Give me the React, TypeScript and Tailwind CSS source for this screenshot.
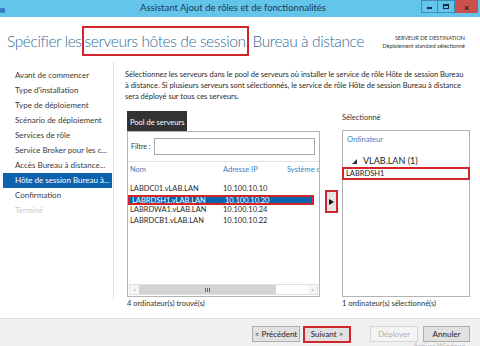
import React from "react";

const steps = [
  "Avant de commencer",
  "Type d'installation",
  "Type de déploiement",
  "Scénario de déploiement",
  "Services de rôle",
  "Service Broker pour les c...",
  "Accès Bureau à distance...",
  "Hôte de session Bureau à...",
  "Confirmation",
  "Terminé",
];

const servers = [
  { name: "LABDC01.vLAB.LAN", ip: "10.100.10.10" },
  { name: "LABRDSH1.vLAB.LAN", ip: "10.100.10.20", selected: true },
  { name: "LABRDWA1.vLAB.LAN", ip: "10.100.10.24" },
  { name: "LABRDCB1.vLAB.LAN", ip: "10.100.10.22" },
];

const intro = [
  "Sélectionnez les serveurs dans le pool de serveurs où installer le service de rôle Hôte de session Bureau",
  "à distance. Si plusieurs serveurs sont sélectionnés, le service de rôle Hôte de session Bureau à distance",
  "sera déployé sur tous ces serveurs.",
];

export default function App() {
  return (
    <div
      className="w-[480px] h-[346px] bg-white flex flex-col overflow-hidden text-[#1e1e1e]"
      style={{ fontFamily: 'Lato, "Open Sans", sans-serif' }}
    >
      {/* title bar */}
      <div className="h-[17px] bg-[#63c5ea] flex items-start relative shrink-0">
        <div className="w-[5px] h-[5px] bg-[#3a7bbf] mt-[8px] rounded-[1px]" />
        <div className="flex-1 text-center text-[9.5px] leading-[15px] text-[#1b3a55] pl-[40px]">
          Assistant Ajout de rôles et de fonctionnalités
        </div>
        <div className="flex h-[13px] mr-[2px]">
          <div className="w-[17px] h-[13px] border border-[#3a8fb8] flex items-end justify-center pb-[3px]">
            <div className="w-[5px] h-[2px] bg-[#1a2a3a]" />
          </div>
          <div className="w-[17px] h-[13px] border border-l-0 border-[#3a8fb8] flex items-center justify-center">
            <div className="w-[6px] h-[5px] border-[1.5px] border-t-[2px] border-[#1a2a3a]" />
          </div>
          <div className="w-[23px] h-[13px] bg-[#c8504d] flex items-center justify-center text-[8px] font-bold text-[#3a1010] leading-none">
            x
          </div>
        </div>
      </div>

      {/* header */}
      <div className="h-[45px] shrink-0 flex items-center justify-between pl-[7px] pr-[15px] pt-[5px]">
        <div className="text-[15.5px] font-light text-[#346d98] leading-none whitespace-nowrap tracking-[-0.4px]">
          Spécifier les
          <span className="border-2 border-[#d0262b] px-[1px] py-[4px]">serveurs hôtes de session</span>
          {" "}Bureau à distance
        </div>
        <div className="text-right text-[5.5px] leading-[8px] text-[#333] whitespace-nowrap">
          <div>SERVEUR DE DESTINATION</div>
          <div>Déploiement standard sélectionné</div>
        </div>
      </div>

      {/* body */}
      <div className="flex-1 flex min-h-0">
        <div className="w-[114px] shrink-0 pt-[6px] pl-[3px] pr-[1px] border-r border-[#e3e3e3] mb-[18px]">
          {steps.map((s, i) => (
            <div
              key={s}
              className={`h-[15px] leading-[15px] pl-[12px] text-[8px] whitespace-nowrap overflow-hidden ${
                i === 7
                  ? "bg-[#0d62ad] text-white"
                  : i === 9
                  ? "text-[#c8c8c8]"
                  : "text-[#3a3a3a]"
              }`}
            >
              {s}
            </div>
          ))}
        </div>

        <div className="flex-1 pl-[11px] pr-[8px] pt-[7px] flex flex-col">
          <div className="text-[7.5px] leading-[11px] text-[#2a2a2a]">
            {intro.map((l) => (
              <div key={l} className="whitespace-nowrap">
                {l}
              </div>
            ))}
          </div>

          <div className="flex mt-[9px]">
            {/* left pool */}
            <div className="w-[193px] ml-[2px] flex flex-col">
              <div className="h-[20px] w-[60px] bg-[#333333] text-white text-[7.5px] leading-[24px] pl-[3px] whitespace-nowrap">
                Pool de serveurs
              </div>
              <div className="h-[166px] border border-[#b4b4b4] flex flex-col">
                <div className="flex items-center h-[30px] pl-[3px] pr-[4px] border-b border-[#e2e2e2]">
                  <span className="text-[7px] text-[#333] w-[23px] shrink-0 whitespace-nowrap">Filtre :</span>
                  <div className="flex-1 h-[17px] border border-[#a9a9a9] bg-white" />
                </div>
                <div className="flex text-[7.5px] text-[#3a7fc4] h-[16px] leading-[16px] pl-[2px] whitespace-nowrap overflow-hidden">
                  <span className="w-[93px] shrink-0">Nom</span>
                  <span className="w-[64px] shrink-0">Adresse IP</span>
                  <span>Système d</span>
                </div>
                <div className="mt-[6px] pr-[5px]">
                  {servers.map((s) => (
                    <div
                      key={s.name}
                      className={`flex h-[10.5px] text-[7.5px] pl-[2px] whitespace-nowrap ${
                        s.selected
                          ? "bg-[#0d62ad] text-white border-2 border-[#d0262b] pl-0 leading-[7px]"
                          : "text-[#2a2a2a] leading-[10px]"
                      }`}
                    >
                      <span className="w-[93px] shrink-0">{s.name}</span>
                      <span>{s.ip}</span>
                    </div>
                  ))}
                </div>
                <div className="flex-1" />
                <div className="h-[11px] flex items-stretch mx-[1px] mb-[1px] border border-[#e0e0e0] bg-[#f6f6f6]">
                  <div className="w-[9px] text-[6px] text-[#999] flex items-center justify-center">&lt;</div>
                  <div className="w-[137px] bg-[#d4d4d4] flex items-center justify-center">
                    <div className="flex gap-[1px]">
                      <div className="w-[1px] h-[4px] bg-[#666]" />
                      <div className="w-[1px] h-[4px] bg-[#666]" />
                      <div className="w-[1px] h-[4px] bg-[#666]" />
                    </div>
                  </div>
                  <div className="flex-1 bg-white" />
                  <div className="w-[9px] text-[6px] text-[#999] flex items-center justify-center">&gt;</div>
                </div>
              </div>
              <div className="text-[7.5px] leading-[12px] text-[#333] mt-[1px]">4 ordinateur(s) trouvé(s)</div>
            </div>

            {/* arrow */}
            <div className="w-[22px] flex justify-center pt-[79px]">
              <div className="w-[13px] h-[23px] border-2 border-[#d0262b] bg-[#e4e4e4] flex items-center justify-center">
                <svg width="5" height="6" viewBox="0 0 5 6">
                  <path d="M0 0 L5 3 L0 6 Z" fill="#111" />
                </svg>
              </div>
            </div>

            {/* selected */}
            <div className="w-[128px] flex flex-col">
              <div className="h-[19px] text-[7.5px] leading-[12px] text-[#333] pt-[1px]">Sélectionné</div>
              <div className="h-[167px] border border-[#b4b4b4] flex flex-col">
                <div className="text-[7.5px] text-[#3a7fc4] pl-[4px] pt-[4px] leading-[10px]">Ordinateur</div>
                <div className="flex items-center pl-[9px] mt-[10px] text-[9px] leading-[12px] text-[#222]">
                  <svg width="5" height="5" viewBox="0 0 5 5" className="mr-[6px]">
                    <path d="M5 0 L5 5 L0 5 Z" fill="#333" />
                  </svg>
                  VLAB.LAN (1)
                </div>
                <div className="h-[13px] border-2 border-[#d0262b] text-[7.5px] leading-[9px] pl-[2px] text-[#222] -mx-[1px]">
                  LABRDSH1
                </div>
              </div>
              <div className="text-[7.5px] leading-[12px] text-[#333] mt-[1px] whitespace-nowrap">
                1 ordinateur(s) sélectionné(s)
              </div>
            </div>
          </div>
        </div>
      </div>

      {/* footer */}
      <div className="h-[28px] shrink-0 bg-[#f0f0f0] border-t border-[#dcdcdc] flex items-start justify-end pt-[7px] pr-[10px] relative">
        <button className="w-[48px] h-[16px] border border-[#adadad] bg-[#e1e1e1] text-[8px] text-[#222] leading-none">
          &lt; Précédent
        </button>
        <button className="w-[48px] h-[17px] -mt-[0.5px] ml-[3px] border-2 border-[#d0262b] bg-[#e1e1e1] text-[8px] text-[#222] leading-none">
          Suivant &gt;
        </button>
        <button className="w-[48px] h-[16px] ml-[19px] border border-[#d6d6d6] bg-[#f4f4f4] text-[8px] text-[#b0b0b0] leading-none">
          Déployer
        </button>
        <button className="w-[47px] h-[16px] ml-[5px] border border-[#adadad] bg-[#e1e1e1] text-[8px] text-[#222] leading-none">
          Annuler
        </button>
        <div className="absolute right-[14px] top-[24px] text-[7px] text-[#b8b8b8] leading-none whitespace-nowrap">
          Activer Windows
        </div>
      </div>
    </div>
  );
}
